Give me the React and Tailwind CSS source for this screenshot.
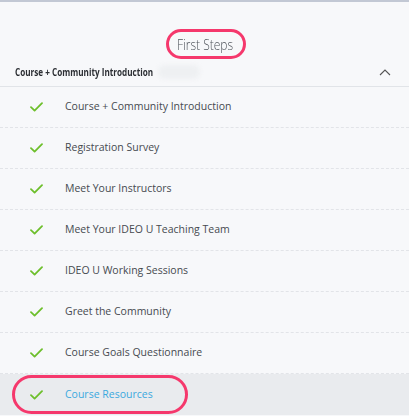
import React from 'react';

const items = [
  'Course + Community Introduction',
  'Registration Survey',
  'Meet Your Instructors',
  'Meet Your IDEO U Teaching Team',
  'IDEO U Working Sessions',
  'Greet the Community',
  'Course Goals Questionnaire',
];

function Check() {
  return (
    <svg width="13" height="10" viewBox="0 0 13 10" fill="none">
      <path d="M1 5.2 L4.6 8.6 L12 1.2" stroke="#6dbf2b" strokeWidth="1.8" strokeLinecap="round" strokeLinejoin="round" />
    </svg>
  );
}

function Row({ label, active }) {
  return (
    <div
      className={
        'flex items-center h-[41px] ' +
        (active ? 'bg-[#e9ebee]' : 'border-b border-dashed border-[#e2e4e8]')
      }
    >
      <div className="w-[65px] flex justify-center pl-[7px] shrink-0">
        <Check />
      </div>
      <span className={'text-[10.5px] ' + (active ? 'text-[#3ba9de]' : 'text-[#464a50]')}>
        {label}
      </span>
    </div>
  );
}

export default function App() {
  return (
    <div
      className="w-[409px] h-[416px] overflow-hidden bg-[#f7f8fa] border-t-2 border-[#c2c8d4]"
      style={{ fontFamily: '"Open Sans", "Noto Sans", sans-serif' }}
    >
      <div className="flex justify-center pt-[27px]">
        <div className="w-[80px] h-[30px] ml-[2px] rounded-full border-[3px] border-[#f5386c] flex items-center justify-center">
          <span className="text-[15px] font-light text-[#4f545b] inline-block scale-x-[0.8] whitespace-nowrap">
            First Steps
          </span>
        </div>
      </div>
      <div className="relative flex items-center justify-between h-[28px] px-[15px] border-b border-[#e1e4e8]">
        <span className="text-[11px] font-bold text-[#2b2e33] inline-block origin-left scale-x-[0.74] whitespace-nowrap">
          Course + Community Introduction
        </span>
        <div className="absolute left-[158px] top-[6px] w-[42px] h-[14px] rounded-full bg-[#eef0f2] blur-[2px]" />
        <svg width="12" height="7" viewBox="0 0 12 7" fill="none" className="mr-[3px]">
          <path d="M1 6 L6 1 L11 6" stroke="#555" strokeWidth="1.1" />
        </svg>
      </div>
      {items.map((label) => (
        <Row key={label} label={label} />
      ))}
      <div className="relative">
        <Row label="Course Resources" active />
        <div className="absolute left-[12px] top-[1px] w-[176px] h-[39px] rounded-full border-[3px] border-[#f5386c]" />
      </div>
    </div>
  );
}
